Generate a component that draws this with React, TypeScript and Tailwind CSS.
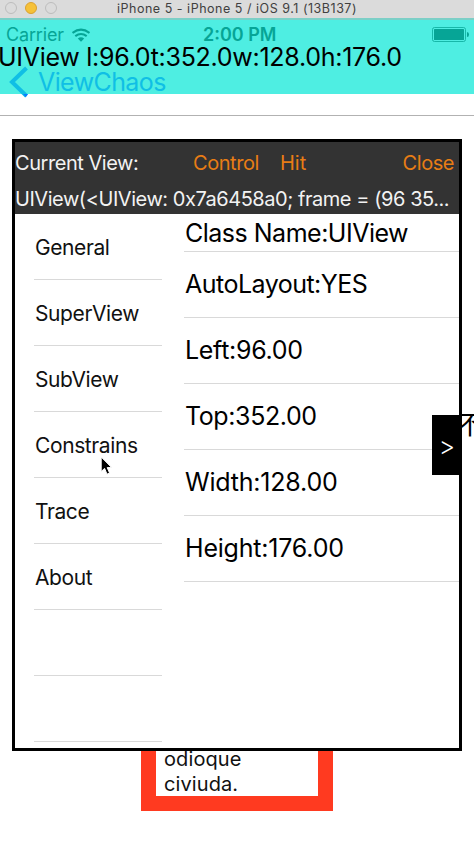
const menu = ['General', 'SuperView', 'SubView', 'Constrains', 'Trace', 'About', '', ''];
const details = [
  { label: 'AutoLayout:YES', tracking: 'tracking-[-0.52px]' },
  { label: 'Left:96.00', tracking: 'tracking-[-0.3px]' },
  { label: 'Top:352.00', tracking: 'tracking-[-0.4px]' },
  { label: 'Width:128.00', tracking: 'tracking-[-0.2px]' },
  { label: 'Height:176.00', tracking: 'tracking-[-0.2px]' },
];

function TitleBar() {
  return (
    <header className="relative flex h-[18px] items-center justify-center bg-[#dbdbdb]">
      <div className="absolute left-[5px] top-[2px] flex gap-[8px]">
        <span className="size-3 rounded-full border border-[#bdbdbd]" />
        <span className="size-3 rounded-full border border-[#dba12f] bg-[#f6c138]" />
        <span className="size-3 rounded-full border border-[#bdbdbd]" />
      </div>
      <h1 className="text-[12.5px] leading-[18px] tracking-[0.52px] text-[#404040]">iPhone 5 - iPhone 5 / iOS 9.1 (13B137)</h1>
    </header>
  );
}

function StatusBar() {
  return (
    <div className="relative flex h-[33px] items-center justify-between border-t-2 border-[#7ccfc7] pb-[2px] pl-[6px] pr-[5px] text-[#06a596]">
      <div className="flex items-center gap-[8px]">
        <span className="text-[18px] leading-[29px] tracking-[-0.15px]">Carrier</span>
        <svg className="h-[14px] w-[18px]" viewBox="0 0 18 14" fill="none" stroke="currentColor" strokeWidth="2.1">
          <path d="M.5 5Q9-1.6 17.5 5M3.3 8.2Q9 3.8 14.7 8.2" />
          <path d="M5.8 10.6Q9 7.8 12.2 10.6L9 13.7Z" fill="currentColor" stroke="none" />
        </svg>
      </div>
      <span className="absolute left-[203px] text-[18px] font-semibold leading-[29px]">2:00 PM</span>
      <svg className="h-[15px] w-[37px]" viewBox="0 0 37 15">
        <rect x=".5" y=".5" width="33" height="14" rx="2" fill="none" stroke="currentColor" strokeOpacity=".75" />
        <rect x="2" y="2" width="30" height="11" rx=".5" fill="currentColor" />
        <path d="M35 5Q37 5 37 7.5T35 10Z" fill="currentColor" />
      </svg>
    </div>
  );
}

function Inspector() {
  return (
    <section className="absolute left-[12px] top-[139px] flex h-[612px] w-[450px] flex-col border-[3px] border-black bg-white">
      <div className="h-[72px] bg-[#333333] text-[20px] tracking-[-0.45px] text-[#f2f2f2]">
        <div className="flex h-[36px] items-center pr-[5px] pt-[6px]">
          <span className="w-[178px]">Current View:</span>
          <span className="w-[87px] text-[#e87d15]">Control</span>
          <span className="tracking-normal text-[#e87d15]">Hit</span>
          <span className="ml-auto text-[#e87d15]">Close</span>
        </div>
        <p className="h-[36px] whitespace-nowrap leading-[42px]">UIView(&lt;UIView: 0x7a6458a0; frame = (96 35...</p>
      </div>
      <div className="flex min-h-0 flex-1 overflow-hidden">
        <ul className="ml-[19px] w-[128px] shrink-0">
          {menu.map((label, i) => (
            <li key={i} className="h-[66px] border-b border-[#d9d9d9] text-[21px] leading-[68px] tracking-[-0.4px] text-[#111111]">
              <span className="ml-px">{label}</span>
            </li>
          ))}
        </ul>
        <ul className="ml-[22px] flex-1 whitespace-nowrap text-[25px] text-black">
          <li className="h-[38px] border-b border-[#d9d9d9] pl-px leading-[39px] tracking-[-0.5px]">Class Name:UIView</li>
          {details.map(({ label, tracking }) => (
            <li key={label} className={`h-[66px] border-b border-[#d9d9d9] pl-px leading-[65px] ${tracking}`}>{label}</li>
          ))}
        </ul>
      </div>
    </section>
  );
}

export default function App() {
  return (
    <main className="relative h-[868px] w-[474px] overflow-hidden bg-white font-['Inter','Noto_Sans_CJK_SC',sans-serif]">
      <TitleBar />
      <div className="h-[98px] border-b border-[#b2b2b2]">
        <div className="h-[76px] bg-[#4eeee2]">
          <StatusBar />
          <nav className="flex h-[43px] items-center pl-[9px] pt-[19px] text-[#10bfe5]">
            <svg className="relative h-[32px] w-[20px] shrink-0 overflow-visible" viewBox="0 0 20 32" fill="none">
              <path d="M17.5 2L3 16L17.5 30" stroke="#10bfe5" strokeWidth="4" />
              <path d="M14 28h5l-2.2 3.2z" fill="#087eff" />
            </svg>
            <span className="ml-[9px] text-[25px] leading-[30px] tracking-[-0.6px]">ViewChaos</span>
          </nav>
        </div>
      </div>
      <p className="absolute left-[-2px] top-[42px] whitespace-nowrap text-[25px] leading-[30px] tracking-[-0.28px] text-black">UIView l:96.0t:352.0w:128.0h:176.0</p>
      <span className="absolute left-[457px] top-[408px] whitespace-nowrap font-['Noto_Sans_CJK_SC',sans-serif] text-[26px] leading-[30px] text-black">不</span>
      <div className="absolute left-[141px] top-[700px] flex h-[111px] w-[192px] items-end border-[15px] border-[#ff3a20] bg-white pl-[8px] text-[20px] leading-[25px] text-[#111111]">
        <p className="translate-y-px tracking-[0.1px]">odioque<br />civiuda.</p>
      </div>
      <Inspector />
      <button className="absolute left-[432px] top-[415px] flex h-[60px] w-[30px] items-center justify-center bg-black text-white" aria-label="Expand">
        <span className="translate-y-px text-[25px] font-light leading-none">&gt;</span>
      </button>
      <svg className="absolute left-[100px] top-[456px] h-[20px] w-[13px]" viewBox="0 0 13 20">
        <path d="M1.2 1V15.5L4.6 12.4L7 18.2L9.6 17.1L7.2 11.6H11.7Z" fill="#000" stroke="#fff" />
      </svg>
    </main>
  );
}
